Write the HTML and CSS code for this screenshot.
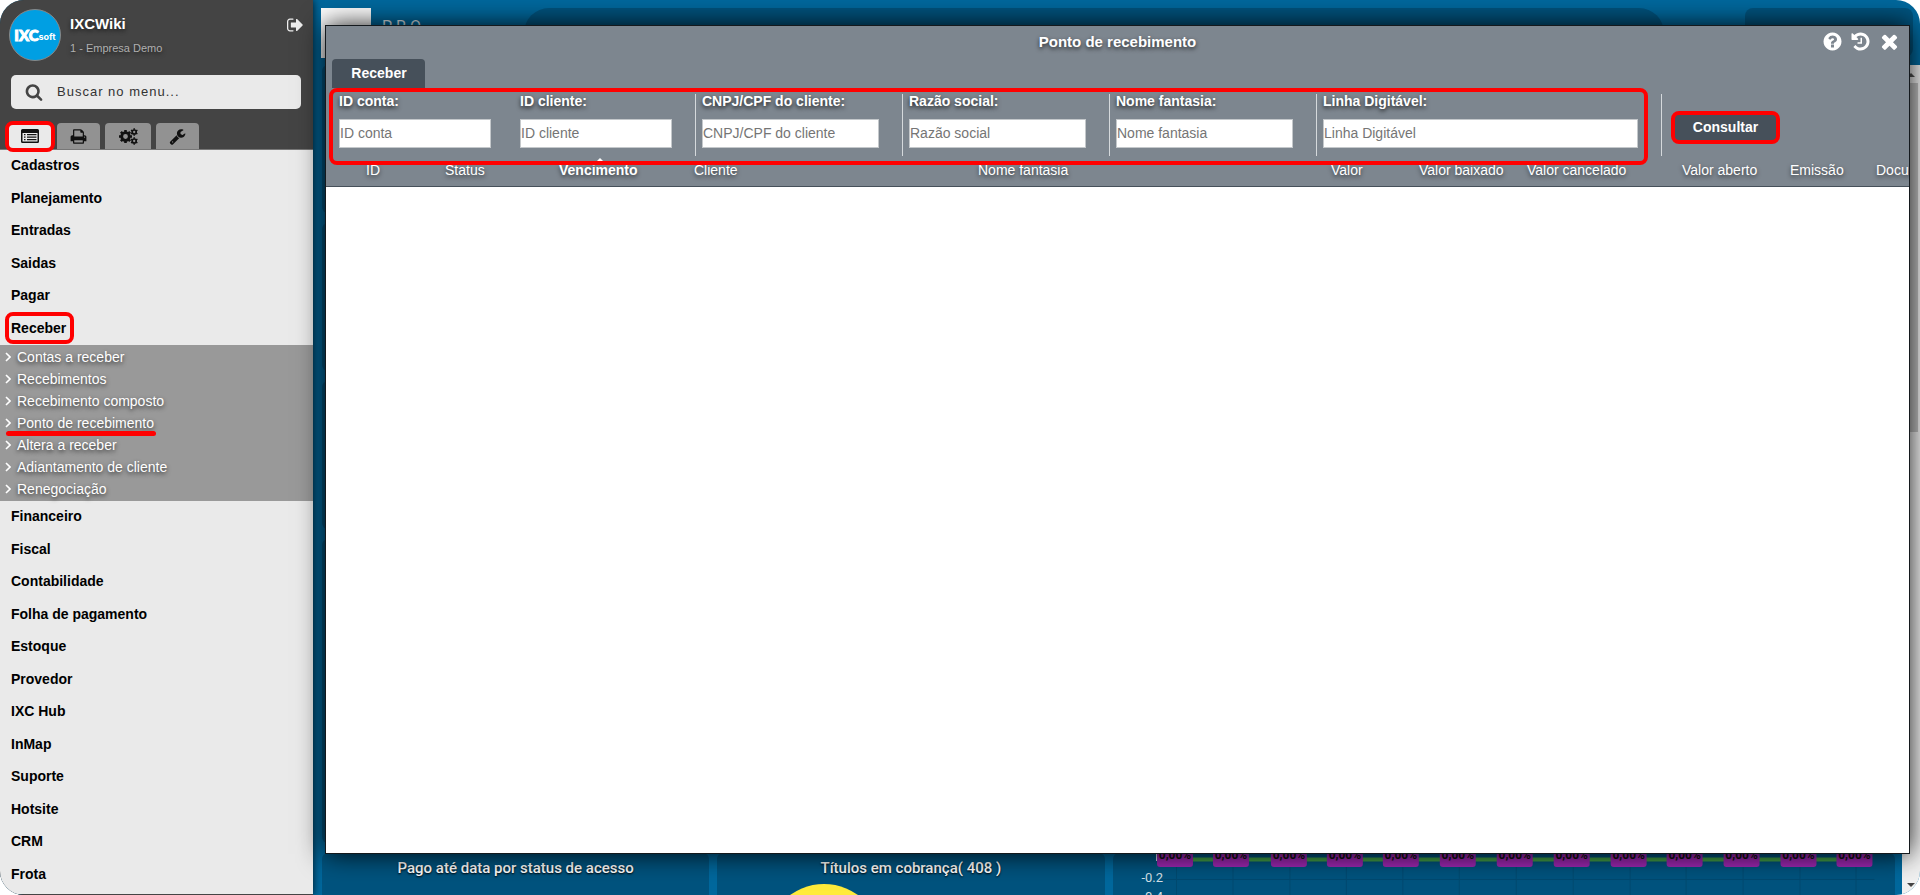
FILE: index.html
```html
<!DOCTYPE html>
<html lang="pt-BR">
<head>
<meta charset="utf-8">
<title>Ponto de recebimento</title>
<link rel="stylesheet" href="styles.css">
</head>
<body>
<svg class="sprite" aria-hidden="true">
  <symbol id="i-signout" viewBox="0 0 1792 1792"><path d="M640 1440q0 4 1 20t.5 26.5-3 23.5-10 19.5-20.5 6.5h-320q-119 0-203.5-84.5t-84.5-203.5v-704q0-119 84.5-203.5t203.5-84.5h320q13 0 22.5 9.5t9.5 22.5q0 4 1 20t.5 26.5-3 23.5-10 19.5-20.5 6.5h-320q-66 0-113 47t-47 113v704q0 66 47 113t113 47h312l11.5 1 11.5 3 8 5.5 7 9 2 13.5zm928-544q0 26-19 45l-544 544q-19 19-45 19t-45-19-19-45v-288h-448q-26 0-45-19t-19-45v-384q0-26 19-45t45-19h448v-288q0-26 19-45t45-19 45 19l544 544q19 19 19 45z"/></symbol>
  <symbol id="i-search" viewBox="0 0 1792 1792"><path d="M1216 832q0-185-131.5-316.5t-316.5-131.5-316.5 131.5-131.5 316.5 131.5 316.5 316.5 131.5 316.5-131.5 131.5-316.5zm512 832q0 52-38 90t-90 38q-54 0-90-38l-343-342q-179 124-399 124-143 0-273.5-55.5t-225-150-150-225-55.5-273.5 55.5-273.5 150-225 225-150 273.5-55.5 273.5 55.5 225 150 150 225 55.5 273.5q0 220-124 399l343 343q37 37 37 90z"/></symbol>
  <symbol id="i-list" viewBox="0 0 18 14"><path fill-rule="evenodd" d="M1.500 0h15Q18 0 18 1.500v11Q18 14 16.500 14h-15Q0 14 0 12.500v-11Q0 0 1.500 0zM1.500 4v8.500h15V4z"/><path d="M3 5h1.500v1.200H3zM6 5h9.500v1.200H6zM3 7.500h1.500v1.200H3zM6 7.500h9.500v1.200H6zM3 10h1.500v1.200H3zM6 10h9.500v1.200H6z"/></symbol>
  <symbol id="i-print" viewBox="0 0 1792 1792"><path d="M448 1536h896v-256h-896v256zm0-640h896v-384h-160q-40 0-68-28t-28-68v-160h-640v640zm1152 64q0-26-19-45t-45-19-45 19-19 45 19 45 45 19 45-19 19-45zm128 0v416q0 13-9.500 22.500t-22.500 9.500h-224v160q0 40-28 68t-68 28h-960q-40 0-68-28t-28-68v-160h-224q-13 0-22.500-9.500t-9.500-22.500v-416q0-79 56.500-135.500t135.500-56.500h64v-544q0-40 28-68t68-28h672q40 0 88 20t76 48l152 152q28 28 48 76t20 88v256h64q79 0 135.500 56.500t56.500 135.500z"/></symbol>
  <symbol id="i-cogs" viewBox="0 0 19 17"><g fill="none" stroke="currentColor"><circle cx="6.500" cy="8.500" r="3.800" stroke-width="2.800"/><path stroke-width="2.600" d="M6.500 2v2M6.500 13v2M0 8.500h2M11 8.500h2M1.900 3.900l1.500 1.500M9.600 11.600l1.500 1.500M1.900 13.100l1.500-1.500M9.600 5.400l1.500-1.500"/><circle cx="15.200" cy="4" r="2" stroke-width="1.700"/><circle cx="15.200" cy="13" r="2" stroke-width="1.700"/><path stroke-width="1.500" d="M15.200.3v1.500M15.200 6.200v1.500M12 2.200l1.300.7M17.100 5.100l1.300.7M12 5.800l1.300-.7M17.100 2.900l1.300-.7M15.200 9.300v1.500M15.200 15.200v1.500M12 11.200l1.300.7M17.100 14.100l1.300.7M12 14.800l1.300-.7M17.100 11.900l1.300-.7"/></g></symbol>
  <symbol id="i-wrench" viewBox="0 0 1792 1792"><path d="M448 1472q0-26-19-45t-45-19-45 19-19 45 19 45 45 19 45-19 19-45zm644-420l-682 682q-37 37-90 37-52 0-91-37l-106-108q-38-36-38-90 0-53 38-91l681-681q39 98 114.500 173.500t173.500 114.500zm634-435q0 39-23 106-47 134-164.500 217.500t-258.500 83.500q-185 0-316.500-131.500t-131.500-316.500 131.500-316.500 316.500-131.500q58 0 121.500 16.500t107.500 46.500q16 11 16 28t-16 28l-293 169v224l193 107q5-3 79-48.500t135.500-81 70.500-35.500q15 0 23.500 10t8.500 25z"/></symbol>
  <symbol id="i-help" viewBox="0 0 1792 1792"><path d="M1024 1376v-192q0-14-9-23t-23-9h-192q-14 0-23 9t-9 23v192q0 14 9 23t23 9h192q14 0 23-9t9-23zm256-672q0-88-55.500-163t-138.500-116-170-41q-243 0-371 213-15 24 8 42l132 100q7 6 19 6 16 0 25-12 53-68 86-92 34-24 86-24 48 0 85.500 26t37.500 59q0 38-20 61t-68 45q-63 28-115.500 86.500t-52.500 125.500v36q0 14 9 23t23 9h192q14 0 23-9t9-23q0-19 21.500-49.500t54.500-49.500q32-18 49-28.500t46-35 44.500-48 28-60.500 12.500-81zm384 192q0 209-103 385.500t-279.500 279.500-385.500 103-385.500-103-279.500-279.500-103-385.500 103-385.500 279.500-279.500 385.500-103 385.500 103 279.500 279.500 103 385.500z"/></symbol>
  <symbol id="i-history" viewBox="0 0 1792 1792"><path d="M1664 896q0 156-61 298t-164 245-245 164-298 61q-172 0-327-72.500t-264-204.500q-7-10-6.500-22.500t8.500-20.500l137-138q10-9 25-9 16 2 23 12 73 95 179 147t225 52q104 0 198.500-40.500t163.500-109.500 109.500-163.500 40.500-198.500-40.500-198.500-109.500-163.500-163.500-109.500-198.500-40.500q-98 0-188 35.500t-160 101.500l137 138q31 30 14 69-17 40-59 40h-448q-26 0-45-19t-19-45v-448q0-42 40-59 39-17 69 14l130 129q107-101 244.500-156.500t284.500-55.500q156 0 298 61t245 164 164 245 61 298zm-640-288v448q0 14-9 23t-23 9h-320q-14 0-23-9t-9-23v-64q0-14 9-23t23-9h224v-352q0-14 9-23t23-9h64q14 0 23 9t9 23z"/></symbol>
  <symbol id="i-close" viewBox="0 0 1792 1792"><path d="M1490 1322q0 40-28 68l-136 136q-28 28-68 28t-68-28l-294-294-294 294q-28 28-68 28t-68-28l-136-136q-28-28-28-68t28-68l294-294-294-294q-28-28-28-68t28-68l136-136q28-28 68-28t68 28l294 294 294-294q28-28 68-28t68 28l136 136q28 28 28 68t-28 68l-294 294 294 294q28 28 28 68z"/></symbol>
  <symbol id="i-chevron" viewBox="0 0 6 10"><path d="M1 1l4 4-4 4" fill="none" stroke="currentColor" stroke-width="1.600"/></symbol>
</svg>

<div class="app">
  <aside class="sidebar">
    <header class="user">
      <span class="avatar"><b>IXC</b><i>soft</i></span>
      <div class="user-text">
        <strong>IXCWiki</strong>
        <small>1 - Empresa Demo</small>
      </div>
      <button class="logout" aria-label="Sair"><svg><use href="#i-signout"/></svg></button>
    </header>
    <label class="menu-search">
      <svg><use href="#i-search"/></svg>
      <input type="text" placeholder="Buscar no menu..." aria-label="Buscar no menu">
    </label>
    <div class="tabs">
      <button class="tab tab-active" aria-label="Menu"><svg class="icon-list"><use href="#i-list"/></svg></button>
      <button class="tab" aria-label="Imprimir"><svg><use href="#i-print"/></svg></button>
      <button class="tab tab-wide" aria-label="Configurações"><svg class="icon-cogs"><use href="#i-cogs"/></svg></button>
      <button class="tab" aria-label="Ferramentas"><svg><use href="#i-wrench"/></svg></button>
    </div>
    <nav class="menu">
      <a class="item" href="#">Cadastros</a>
      <a class="item" href="#">Planejamento</a>
      <a class="item" href="#">Entradas</a>
      <a class="item" href="#">Saidas</a>
      <a class="item" href="#">Pagar</a>
      <a class="item item-marked" href="#">Receber</a>
      <div class="submenu">
        <a href="#"><svg><use href="#i-chevron"/></svg>Contas a receber</a>
        <a href="#"><svg><use href="#i-chevron"/></svg>Recebimentos</a>
        <a href="#"><svg><use href="#i-chevron"/></svg>Recebimento composto</a>
        <a class="sub-marked" href="#"><svg><use href="#i-chevron"/></svg>Ponto de recebimento</a>
        <a href="#"><svg><use href="#i-chevron"/></svg>Altera a receber</a>
        <a href="#"><svg><use href="#i-chevron"/></svg>Adiantamento de cliente</a>
        <a href="#"><svg><use href="#i-chevron"/></svg>Renegociação</a>
      </div>
      <a class="item" href="#">Financeiro</a>
      <a class="item" href="#">Fiscal</a>
      <a class="item" href="#">Contabilidade</a>
      <a class="item" href="#">Folha de pagamento</a>
      <a class="item" href="#">Estoque</a>
      <a class="item" href="#">Provedor</a>
      <a class="item" href="#">IXC Hub</a>
      <a class="item" href="#">InMap</a>
      <a class="item" href="#">Suporte</a>
      <a class="item" href="#">Hotsite</a>
      <a class="item" href="#">CRM</a>
      <a class="item" href="#">Frota</a>
    </nav>
  </aside>

  <main class="desktop">
    <header class="topbar">
      <span class="brand"></span>
      <span class="plan">P R O —</span>
      <span class="top-search"></span>
      <span class="top-box"></span>
    </header>
    <div class="workspace">
      <div class="dashboard">
        <section class="card wide"></section>
        <section class="card wide"></section>
        <section class="card wide"></section>
        <section class="card wide"></section>
        <section class="card"><h2>Pago até data por status de acesso</h2></section>
        <section class="card">
          <h2>Títulos em cobrança( 408 )</h2>
          <svg class="pie" viewBox="0 0 116 116"><circle cx="58" cy="58" r="58" fill="#ffeb3b"/></svg>
        </section>
        <section class="card chart-card">
          <svg class="chart" viewBox="1 0 783 60" role="img" aria-label="Percentual">
            <g stroke="#004a70"><path d="M50 26.500H763M64.500 0V60M121 0V60M178 0V60M234.500 0V60M291 0V60M347.500 0V60M404.500 0V60M461.500 0V60M518.500 0V60M574.500 0V60M631.500 0V60M688.500 0V60M744.500 0V60"/></g>
            <path d="M44.500 0V8" stroke="#dfe8ee"/>
            <path d="M60 6.500H745" stroke="#43a047" stroke-width="4"/>
            <g fill="#9c27b0"><rect x="45" y="-10" width="36" height="24" rx="3"/><rect x="101" y="-10" width="36" height="24" rx="3"/><rect x="159" y="-10" width="36" height="24" rx="3"/><rect x="215" y="-10" width="36" height="24" rx="3"/><rect x="271" y="-10" width="36" height="24" rx="3"/><rect x="328" y="-10" width="36" height="24" rx="3"/><rect x="385" y="-10" width="36" height="24" rx="3"/><rect x="442" y="-10" width="36" height="24" rx="3"/><rect x="499" y="-10" width="36" height="24" rx="3"/><rect x="555" y="-10" width="36" height="24" rx="3"/><rect x="612" y="-10" width="36" height="24" rx="3"/><rect x="669" y="-10" width="36" height="24" rx="3"/><rect x="725" y="-10" width="36" height="24" rx="3"/></g>
            <g class="point-label"><text x="63" y="6">0,00%</text><text x="119" y="6">0,00%</text><text x="177" y="6">0,00%</text><text x="233" y="6">0,00%</text><text x="289" y="6">0,00%</text><text x="346" y="6">0,00%</text><text x="403" y="6">0,00%</text><text x="460" y="6">0,00%</text><text x="517" y="6">0,00%</text><text x="573" y="6">0,00%</text><text x="630" y="6">0,00%</text><text x="687" y="6">0,00%</text><text x="743" y="6">0,00%</text></g>
            <g class="axis-label"><text x="51" y="29">-0.2</text><text x="51" y="48">-0.4</text></g>
          </svg>
        </section>
      </div>
      <div class="scrollbar"><span class="arrow-up"></span><span class="thumb"></span><span class="arrow-down"></span></div>
    </div>

    <section class="window" aria-label="Ponto de recebimento">
      <header class="window-head">
        <h1>Ponto de recebimento</h1>
        <div class="window-actions">
          <button aria-label="Ajuda"><svg><use href="#i-help"/></svg></button>
          <button aria-label="Histórico"><svg><use href="#i-history"/></svg></button>
          <button class="close" aria-label="Fechar"><svg><use href="#i-close"/></svg></button>
        </div>
      </header>
      <div class="window-tabs"><button class="window-tab">Receber</button></div>
      <form class="filters">
        <div class="fields">
          <div class="field"><label for="f1">ID conta:</label><input id="f1" class="w-id" placeholder="ID conta"></div>
          <div class="field divided"><label for="f2">ID cliente:</label><input id="f2" class="w-id" placeholder="ID cliente"></div>
          <div class="field divided"><label for="f3">CNPJ/CPF do cliente:</label><input id="f3" class="w-name" placeholder="CNPJ/CPF do cliente"></div>
          <div class="field divided"><label for="f4">Razão social:</label><input id="f4" class="w-name" placeholder="Razão social"></div>
          <div class="field divided"><label for="f5">Nome fantasia:</label><input id="f5" class="w-name" placeholder="Nome fantasia"></div>
          <div class="field divided"><label for="f6">Linha Digitável:</label><input id="f6" class="w-line" placeholder="Linha Digitável"></div>
        </div>
        <button type="button" class="submit">Consultar</button>
      </form>
      <div class="grid-wrap">
        <table>
          <colgroup><col class="c0"><col class="c1"><col class="c2"><col class="c3"><col class="c4"><col class="c5"><col class="c6"><col class="c7"><col class="c8"><col class="c9"><col class="c10"><col class="c11"></colgroup>
          <thead><tr><th></th><th>ID</th><th>Status</th><th class="sorted">Vencimento</th><th>Cliente</th><th>Nome fantasia</th><th>Valor</th><th>Valor baixado</th><th>Valor cancelado</th><th>Valor aberto</th><th>Emissão</th><th>Documento</th></tr></thead>
        </table>
      </div>
    </section>
  </main>
</div>
</body>
</html>
```

FILE: styles.css
```css
* { box-sizing: border-box; }
body { margin: 0; background: #fff; font: 14px/16px "Liberation Sans", Arial, sans-serif; }
button { border: 0; padding: 0; background: none; font: inherit; color: inherit; cursor: pointer; }
input { font: inherit; }
a { color: inherit; text-decoration: none; }
svg { display: block; fill: currentColor; }
h1, h2 { margin: 0; }
.sprite { display: none; }

.app { display: grid; grid-template-columns: 313px minmax(0, 1fr); height: 100vh; overflow: hidden; border-radius: 24px; background: #00689d; }

/* Sidebar */
.sidebar { position: relative; z-index: 1; display: flex; flex-direction: column; min-height: 0; background: #444; box-shadow: 0 0 8px rgba(0, 0, 0, .8); }
.user { display: flex; align-items: center; gap: 9px; padding: 9px 8px 0 9px; color: #fff; text-shadow: 0 2px 4px rgba(0, 0, 0, .6); }
.avatar { display: flex; align-items: center; justify-content: center; width: 52px; height: 52px; border: 1px solid #888; border-radius: 50%; background: #009fe3; text-shadow: none; }
.avatar b { font: 900 15px/16px Lato, sans-serif; -webkit-text-stroke: 1px #fff; }
.avatar i { padding-top: 4px; font: normal 700 9px/12px Inter, sans-serif; }
.user-text { flex: 1; display: flex; flex-direction: column; gap: 8px; padding-top: 2px; }
.user-text strong { font-size: 15px; }
.user-text small { font-size: 11px; color: #b0b0b0; }
.logout { align-self: flex-start; margin-top: 7px; color: #eee; }
.logout svg { width: 18px; height: 18px; }
.menu-search { display: flex; align-items: center; gap: 14px; height: 34px; margin: 14px 12px 0 11px; padding: 0 0 1px 14px; border-radius: 5px; background: #eaeaea; color: #444; }
.menu-search svg { width: 18px; height: 18px; }
.menu-search input { flex: 1; min-width: 0; border: 0; padding: 0; background: none; font-size: 13px; letter-spacing: 1px; outline: 0; }
.menu-search input::placeholder { color: #333; opacity: 1; }
.tabs { display: flex; gap: 5px; height: 41px; padding: 14px 8px 0; border-bottom: 1px solid #777; }
.tab { display: flex; align-items: center; justify-content: center; width: 43px; border-radius: 4px 4px 0 0; background: #929292; color: #111; }
.tab svg { width: 17px; height: 17px; }
.tab svg.icon-list { width: 18px; height: 14px; }
.tab svg.icon-cogs { width: 19px; height: 17px; }
.tab-wide { width: 46px; }
.tab-active { position: relative; width: 44px; background: #eaeaea; }
.tab-active::after { content: ""; position: absolute; inset: -2px -3px -3px; border: 4px solid #f00; border-radius: 8px; }
.menu { flex: 1; display: flex; flex-direction: column; min-height: 0; margin-bottom: 1px; padding-bottom: 3px; background: #eaeaea; }
.item { flex: 1; display: flex; align-items: center; padding: 0 0 2px 11px; font-weight: 700; color: #000; }
.item-marked { position: relative; align-self: flex-start; }
.item-marked::after { content: ""; position: absolute; inset: -1px -8px 1px 5px; border: 4px solid #f00; border-radius: 8px; }
.submenu { padding: 1px 0; background: #999; color: #fff; text-shadow: 0 2px 4px rgba(0, 0, 0, .7); }
.submenu a { display: flex; align-items: center; gap: 6px; height: 22px; padding-left: 5px; }
.submenu svg { width: 6px; height: 10px; }
.sub-marked { position: relative; }
.sub-marked::after { content: ""; position: absolute; left: 6px; bottom: -2px; width: 150px; height: 5px; border-radius: 3px; background: #f00; }

/* Dashboard behind the window */
.desktop { position: relative; z-index: 2; display: flex; flex-direction: column; min-width: 0; min-height: 0; }
.topbar { display: flex; align-items: flex-start; height: 65px; padding: 8px 7px 0 8px; }
.brand { width: 50px; height: 50px; background: #fff; }
.plan { width: 142px; margin: 9px 0 0 11px; font: 16px/20px Roboto, sans-serif; color: #dfe8ee; }
.top-search { flex: 1; height: 50px; border-radius: 25px; background: #00537e; }
.top-box { width: 168px; height: 49px; margin-left: 81px; border-radius: 8px; background: #00537e; }
.workspace { flex: 1; display: flex; min-height: 0; overflow: hidden; }
.dashboard { flex: 1; display: grid; grid-template-columns: repeat(4, minmax(0, 1fr)); grid-template-rows: 148px 148px 148px 304px 160px; gap: 10px 8px; padding: 0 7px 0 9px; }
.card { position: relative; display: flex; flex-direction: column; align-items: center; overflow: hidden; border-radius: 6px; background: #00537e; }
.wide { grid-column: 1 / -1; }
.card h2 { padding-top: 5px; font: 500 15px/20px Roboto, sans-serif; color: #fff; text-shadow: 0 1px 2px #000; }
.pie { width: 116px; height: 116px; margin: 6px 174px 0 0; }
.chart-card { grid-column: span 2; display: block; }
.chart { width: 100%; }
.point-label text { font: 700 12px Roboto, sans-serif; text-anchor: middle; fill: #111; }
.axis-label text { font: 13px Roboto, sans-serif; text-anchor: end; fill: #d5e0e7; }
.scrollbar { display: flex; flex-direction: column; align-items: center; width: 18px; padding: 8px 0; background: #f1f1f1; }
.arrow-up { border: solid transparent; border-width: 0 4px 4px; border-bottom-color: #555; }
.thumb { width: 14px; height: 349px; margin-top: 6px; background: #c1c1c1; }
.arrow-down { margin-top: auto; border: solid transparent; border-width: 4px 4px 0; border-top-color: #444; }

/* Floating window */
.window { position: absolute; inset: 25px 10px 41px 12px; display: flex; flex-direction: column; overflow: hidden; border: 1px solid #14191d; background: #7d868f; box-shadow: 0 0 25px rgba(0, 0, 0, .9); color: #fff; }
.window-head { display: grid; grid-template-columns: 1fr auto 1fr; align-items: center; height: 33px; padding-bottom: 2px; }
.window-head h1 { grid-column: 2; font-size: 15px; line-height: 20px; text-shadow: 0 2px 4px rgba(0, 0, 0, .7); }
.window-actions { display: flex; justify-content: flex-end; gap: 7px; padding-right: 8px; }
.window-actions svg { width: 21px; height: 21px; }
.window-actions .close svg { width: 23px; height: 23px; }
.window-tabs { padding-left: 6px; }
.window-tab { display: block; width: 93px; height: 29px; padding: 0 0 2px 1px; border-radius: 4px 4px 0 0; background: #46505a; font-weight: 700; }
.filters { display: flex; height: 67px; padding: 6px 0 0 7px; }
.fields { position: relative; z-index: 1; display: flex; height: 62px; }
.fields::after { content: ""; position: absolute; inset: -6px 14px -9px -4px; border: 4px solid #f00; border-radius: 8px; pointer-events: none; }
.field { padding: 0 23px 0 6px; }
.divided { border-right: 1px solid #d5d9dc; }
.field label { display: block; height: 25px; font-weight: 700; line-height: 14px; text-shadow: 0 2px 4px rgba(0, 0, 0, .8); }
.field input { display: block; height: 29px; padding: 0 0 2px; border: 1px solid #c4c8cb; background: #fff; }
.field input::placeholder { color: #757575; }
.w-id { width: 152px; }
.w-name { width: 177px; }
.w-line { width: 315px; }
.submit { width: 109px; height: 33px; margin: 17px 0 0 9px; padding-bottom: 2px; border: 4px solid #f00; border-radius: 8px; background: #46505a; font-weight: 700; }
.grid-wrap { flex: 1; overflow: hidden; background: #fff; }
table { width: 1662px; table-layout: fixed; border-collapse: collapse; background: #7d868f; }
th { height: 31px; padding: 0 0 0 8px; border-bottom: 1px solid #46505a; text-align: left; font-weight: 400; text-shadow: 0 2px 4px rgba(0, 0, 0, .6); }
.sorted { position: relative; font-weight: 700; }
.sorted::before { content: ""; position: absolute; left: 45px; top: 3px; border: solid transparent; border-width: 0 4px 4px; border-bottom-color: #fff; }
.c0 { width: 32px; }
.c1 { width: 79px; }
.c2 { width: 114px; }
.c3 { width: 135px; }
.c4 { width: 284px; }
.c5 { width: 353px; }
.c6 { width: 88px; }
.c7 { width: 108px; }
.c8 { width: 155px; }
.c9 { width: 108px; }
.c10 { width: 86px; }
.c11 { width: 120px; }
```
